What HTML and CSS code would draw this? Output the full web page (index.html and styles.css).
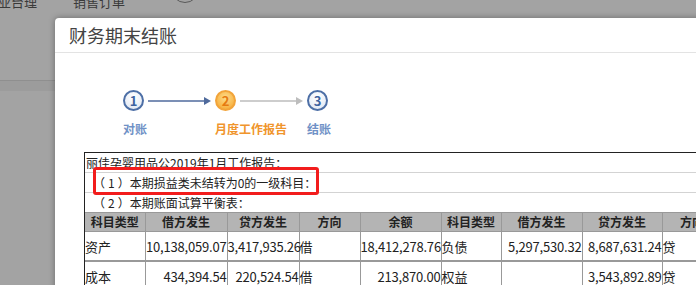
FILE: index.html
```html
<!DOCTYPE html>
<html lang="zh-CN">
  <head>
    <meta charset="UTF-8" />
    <meta name="viewport" content="width=device-width, initial-scale=1.0" />
    <title>财务期末结账</title>
    <link rel="stylesheet" href="styles.css">
  </head>
  <body>
    <!-- 背景页面（被遮罩） -->
    <div class="backdrop">
      <div class="topnav">
        <span class="nav-item nav-first">业台理</span>
        <span class="nav-item">销售订单</span>
        <span class="nav-avatar"></span>
      </div>
      <div class="band"></div>
    </div>

    <!-- 弹窗 -->
    <div class="dialog">
      <div class="dialog-head">财务期末结账</div>
      <div class="dialog-body">
        <div class="steps">
          <div class="step done">
            <div class="step-head">
              <span class="step-num">1</span>
              <svg class="step-arrow" width="63" height="10" viewBox="0 0 63 10">
                <line x1="0" y1="5" x2="57" y2="5" stroke="#4f6a9c" stroke-width="1.4" />
                <polygon points="56,1 63,5 56,9" fill="#4f6a9c" />
              </svg>
            </div>
            <div class="step-label">对账</div>
          </div>
          <div class="step current">
            <div class="step-head">
              <span class="step-num">2</span>
              <svg class="step-arrow" width="63" height="10" viewBox="0 0 63 10">
                <line x1="0" y1="5" x2="57" y2="5" stroke="#bdbdbd" stroke-width="1.4" />
                <polygon points="56,1 63,5 56,9" fill="#bdbdbd" />
              </svg>
            </div>
            <div class="step-label">月度工作报告</div>
          </div>
          <div class="step">
            <div class="step-head">
              <span class="step-num">3</span>
            </div>
            <div class="step-label">结账</div>
          </div>
        </div>

        <div class="report">
          <div class="report-line">丽佳孕婴用品公2019年1月工作报告：</div>
          <div class="report-line sub"><span class="seq">（1</span>）本期损益类未结转为0的一级科目：</div>
          <div class="report-line sub"><span class="seq">（2</span>）本期账面试算平衡表：</div>
          <table class="balance">
            <colgroup>
              <col style="width: 60px" />
              <col style="width: 82px" />
              <col style="width: 72px" />
              <col style="width: 61px" />
              <col style="width: 81px" />
              <col style="width: 60px" />
              <col style="width: 81px" />
              <col style="width: 80px" />
              <col style="width: 60px" />
            </colgroup>
            <thead>
              <tr>
                <th>科目类型</th>
                <th>借方发生</th>
                <th>贷方发生</th>
                <th>方向</th>
                <th>余额</th>
                <th>科目类型</th>
                <th>借方发生</th>
                <th>贷方发生</th>
                <th>方向</th>
              </tr>
            </thead>
            <tbody>
              <tr>
                <td>资产</td>
                <td class="num">10,138,059.07</td>
                <td class="num">3,417,935.26</td>
                <td>借</td>
                <td class="num">18,412,278.76</td>
                <td>负债</td>
                <td class="num">5,297,530.32</td>
                <td class="num">8,687,631.24</td>
                <td>贷</td>
              </tr>
              <tr>
                <td>成本</td>
                <td class="num">434,394.54</td>
                <td class="num">220,524.54</td>
                <td>借</td>
                <td class="num">213,870.00</td>
                <td>权益</td>
                <td class="num"></td>
                <td class="num">3,543,892.89</td>
                <td>贷</td>
              </tr>
            </tbody>
          </table>
          <!-- 标注框 -->
          <div class="mark"></div>
        </div>
      </div>
    </div>
  </body>
</html>
```

FILE: styles.css
```css
body {
  margin: 0;
  width: 696px;
  height: 285px;
  overflow: hidden;
  background-color: #a3a3a3;
  font-family: "Noto Sans CJK SC", "Microsoft YaHei", sans-serif;
  position: relative;
}
.backdrop {
  height: 285px;
}
.topnav {
  display: flex;
  align-items: center;
  height: 18px;
  margin-top: -8px;
}
.nav-item {
  font-size: 13px;
  color: #3a3a3a;
  margin-right: 34px;
}
.nav-first {
  margin-left: -2px;
  margin-right: 36px;
}
.nav-avatar {
  width: 26px;
  height: 26px;
  margin-top: -24px;
  margin-left: 12px;
  border: 1px solid #5a5a5a;
  border-radius: 50%;
}
.band {
  margin-top: 70px;
  height: 10px;
  border-top: 1px solid #8f8f8f;
  background-color: #9c9c9c;
}
.dialog {
  position: absolute;
  left: 55px;
  top: 18px;
  width: 720px;
  height: 320px;
  background-color: #fff;
  border-radius: 4px 0 0 0;
  box-shadow: 0 0 6px rgba(0, 0, 0, 0.35);
}
.dialog-head {
  height: 34px;
  line-height: 34px;
  padding-left: 14px;
  font-size: 18px;
  color: #444;
  border-bottom: 1px solid #e3e3e3;
}
.steps {
  display: flex;
  padding: 37px 0 0 68px;
}
.step-head {
  display: flex;
  align-items: center;
}
.step-num {
  width: 17px;
  height: 17px;
  line-height: 17px;
  text-align: center;
  font-size: 13px;
  font-weight: bold;
  border-radius: 50%;
  border: 2px solid #4d6fa6;
  color: #3d63a0;
  background: radial-gradient(circle at 50% 30%, #fff, #dde5f2);
}
.step-arrow {
  margin: 0 4px;
}
.step-label {
  margin-top: 10px;
  line-height: 16px;
  font-size: 12px;
  font-weight: bold;
  color: #6f91c6;
}
.current .step-num {
  border-color: #f2a43a;
  color: #e67a10;
  background: radial-gradient(circle at 50% 35%, #fddc8c, #f6a52a);
}
.current .step-label {
  color: #f0952c;
}
.report {
  position: relative;
  margin: 15px 0 0 29px;
  border-top: 1px solid #222;
  border-left: 1px solid #222;
}
.report-line {
  height: 19px;
  line-height: 19px;
  padding-left: 1px;
  font-size: 12px;
  color: #222;
  border-bottom: 1px solid #d3d3d3;
}
.report-line.sub {
  padding-left: 8px;
  border-bottom: none;
}
.report-line.sub + .report-line.sub {
  border-top: 1px solid #d3d3d3;
}
.seq {
  letter-spacing: 3px;
}
.balance {
  border-collapse: collapse;
  table-layout: fixed;
  width: 637px;
  font-size: 13px;
  color: #222;
}
.balance th,
.balance td {
  border: 1px solid #999;
  padding: 0;
  white-space: nowrap;
  overflow: visible;
}
.balance th:first-child,
.balance td:first-child {
  border-left: none;
}
.balance th {
  height: 18px;
  line-height: 18px;
  font-size: 12px;
  font-weight: bold;
  background-color: #b4b4b4;
  text-align: center;
}
.balance td {
  height: 28px;
  border-bottom-width: 2px;
  text-align: left;
}
.balance td.num {
  text-align: right;
  letter-spacing: -0.2px;
}
.mark {
  position: absolute;
  left: 8px;
  top: 14px;
  width: 226px;
  height: 28px;
  box-sizing: border-box;
  border: 3px solid #f21c1c;
  border-radius: 3px;
}
```
